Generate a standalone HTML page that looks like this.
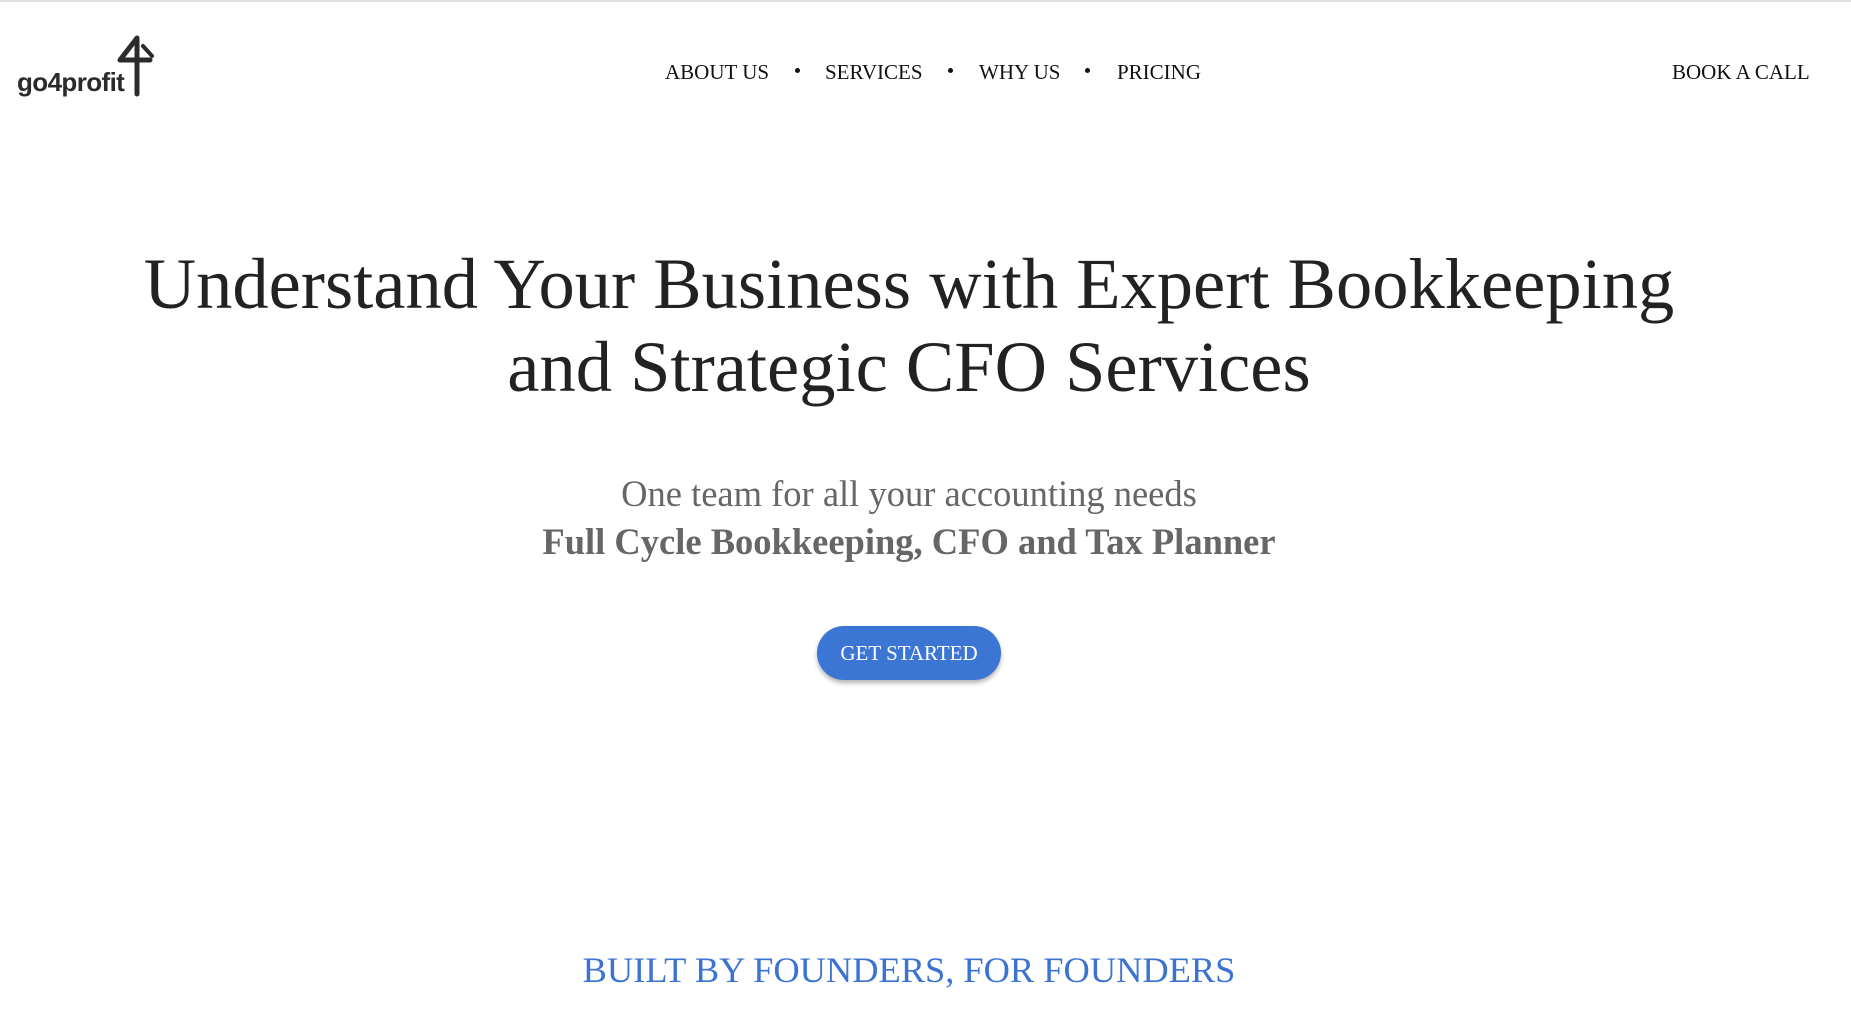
<!DOCTYPE html>
<html><head><meta charset="utf-8"><style>
html,body{margin:0;padding:0;background:#fff;width:1851px;height:1018px;overflow:hidden;position:relative;font-family:"Liberation Serif",serif}
.topline{position:absolute;left:0;top:0;width:1851px;height:2px;background:#dcdfe3}
.logo{position:absolute;left:17px;top:34px;width:150px;height:64px}
.nav{position:absolute;top:58px;font-size:21px;color:#111;white-space:nowrap;line-height:28px}
.dot{position:absolute;top:68px;width:5px;height:5px;border-radius:50%;background:#111}
.c{position:absolute;left:0;width:1818px;text-align:center;white-space:nowrap}
h1{margin:0;font-weight:normal;font-size:72.5px;color:#222;line-height:83px}
.btn{position:absolute;left:817px;top:626px;width:184px;height:54px;border-radius:27px;background:#3b76d4;color:#fff;font-size:21px;line-height:54px;text-align:center;box-shadow:0 3px 5px rgba(0,0,0,.3)}
</style></head><body>
<div class="topline"></div>
<svg class="logo" viewBox="0 0 150 64">
<text x="0" y="57" font-family="Liberation Sans,sans-serif" font-weight="bold" font-size="26" fill="#2b2b2b" letter-spacing="-0.6">go4profit</text>
<path d="M120 60 V4 L103 26 H133" fill="none" stroke="#2b2b2b" stroke-width="5" stroke-linejoin="round" stroke-linecap="round"/>
<path d="M126 12 L135 22" fill="none" stroke="#2b2b2b" stroke-width="4" stroke-linecap="round"/>
</svg>
<div class="nav" style="left:665px">ABOUT US</div>
<div class="dot" style="left:795px"></div>
<div class="nav" style="left:825px">SERVICES</div>
<div class="dot" style="left:948px"></div>
<div class="nav" style="left:979px">WHY US</div>
<div class="dot" style="left:1085px"></div>
<div class="nav" style="left:1117px">PRICING</div>
<div class="nav" style="left:1672px">BOOK A CALL</div>
<div class="c" style="top:242px"><h1>Understand Your Business with Expert Bookkeeping<br>and Strategic CFO Services</h1></div>
<div class="c" style="top:474px;font-size:36.5px;color:#666;line-height:40px">One team for all your accounting needs</div>
<div class="c" style="top:522px;font-size:36.5px;color:#666;font-weight:bold;line-height:40px">Full Cycle Bookkeeping, CFO and Tax Planner</div>
<div class="btn">GET STARTED</div>
<div class="c" style="top:948px;font-size:36.4px;color:#3b73d1;line-height:44px">BUILT BY FOUNDERS, FOR FOUNDERS</div>
</body></html>
